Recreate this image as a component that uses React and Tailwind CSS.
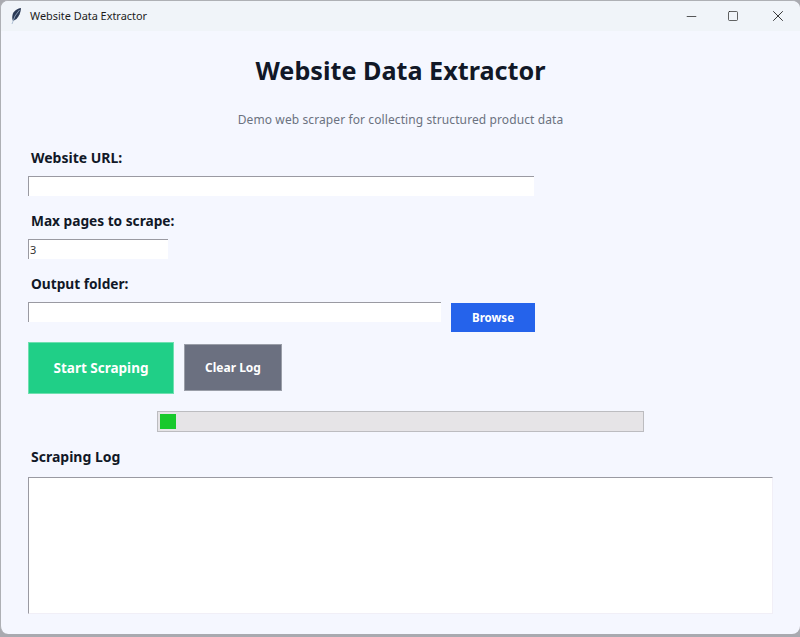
import React from "react";
import { Minus, Square, X } from "lucide-react";

const font = { fontFamily: "'Noto Sans', 'Open Sans', sans-serif" };
const labelCls = "ml-[3px] h-[20px] leading-[20px] font-bold text-[#111827]";
const inputCls = "block h-[20px] bg-white border-t border-l border-[#9a9aa2] outline-none text-[11px] text-[#333] pl-[1px]";

function Feather() {
  return (
    <svg width="12" height="18" viewBox="0 0 12 18">
      <path d="M11 1C7 1.500 3.500 4 2.500 8 2 10.500 2.300 12.500 3 14L6.500 12C9 9.500 10.800 5.500 11 1Z" fill="#2b3a55" />
      <path d="M9.500 3 5 9 2 17" stroke="#9fb4cc" strokeWidth="0.8" fill="none" />
    </svg>
  );
}

export default function App() {
  return (
    <div style={font} className="w-[800px] h-[637px] overflow-hidden bg-[#a9aab0]">
      <div className="h-[634px] overflow-hidden bg-[#f5f7ff] border-l border-t border-[#aeb0b5] rounded-lg flex flex-col">
        <div className="h-[30px] shrink-0 flex items-center bg-[#f0f4f9] pl-[9px]">
          <Feather />
          <span className="ml-[8px] text-[10.9px] text-[#1c1c1c]">Website Data Extractor</span>
          <div className="ml-auto flex items-center text-[#222]">
            <div className="w-[44px] flex justify-center"><Minus size={15} strokeWidth={1.2} /></div>
            <div className="w-[44px] flex justify-center -ml-[2px]"><Square size={12} strokeWidth={1.4} /></div>
            <div className="w-[45px] flex justify-center"><X size={18} strokeWidth={1.2} /></div>
          </div>
        </div>

        <div className="flex-1 flex flex-col pl-[27px] pr-[27px]">
          <h1 className="mt-[19px] h-[40px] text-center text-[25.2px] leading-[40px] font-bold text-[#111827]">Website Data Extractor</h1>
          <p className="mt-[21px] h-[18px] text-center text-[12px] leading-[18px] tracking-[0.1px] text-[#6b7280]">Demo web scraper for collecting structured product data</p>

          <div className={`mt-[19px] text-[14px] ${labelCls}`}>Website URL:</div>
          <input className={`mt-[8px] w-[506px] ${inputCls}`} />

          <div className={`mt-[15px] text-[13.7px] ${labelCls}`}>Max pages to scrape:</div>
          <input className={`mt-[8px] w-[140px] ${inputCls}`} defaultValue="3" />

          <div className={`mt-[15px] text-[13.7px] ${labelCls}`}>Output folder:</div>
          <div className="mt-[8px] flex items-start">
            <input className={`w-[413px] ${inputCls}`} />
            <button className="ml-[10px] mt-[1px] w-[84px] h-[29px] bg-[#2563eb] text-white text-[11.5px] font-bold">Browse</button>
          </div>

          <div className="mt-[10px] flex items-start">
            <button className="w-[146px] h-[52px] bg-[#20cf87] border border-[#6fe0b0] text-white text-[13.5px] font-bold">Start Scraping</button>
            <button className="ml-[10px] mt-[2px] w-[98px] h-[47px] bg-[#6b7080] border border-[#9a9ea8] text-white text-[12px] font-bold">Clear Log</button>
          </div>

          <div className="mt-[17px] ml-[129px] w-[487px] h-[21px] bg-[#e6e4e7] border border-[#bcbcc0] p-[2px]">
            <div className="w-[16px] h-full bg-[#18c92c]" />
          </div>

          <div className={`mt-[15px] text-[14px] ${labelCls}`}>Scraping Log</div>
          <div className="mt-[10px] w-[745px] h-[137px] bg-white border-t border-l border-[#9a9aa2] border-r border-b border-r-[#f1eff7] border-b-[#f1eff7]" />
        </div>
      </div>
    </div>
  );
}
